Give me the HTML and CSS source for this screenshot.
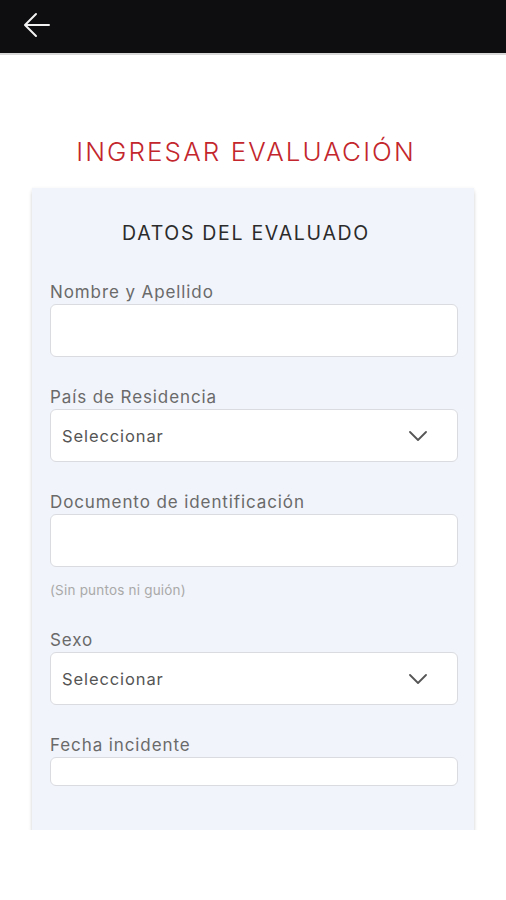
FILE: index.html
```html
<!DOCTYPE html>
<html lang="es">
<head>
<meta charset="utf-8">
<link rel="stylesheet" href="styles.css">
</head>
<body>
<header class="topbar">
  <svg class="back" width="28" height="26" viewBox="0 0 28 26"><path d="M26 13H3M13 2L2 13l11 11" fill="none" stroke="#f2f2f2" stroke-width="2" stroke-linecap="round" stroke-linejoin="round"/></svg>
</header>
<main class="page">
  <h1 class="title">INGRESAR EVALUACIÓN</h1>
  <section class="card">
    <h2 class="card-title">DATOS DEL EVALUADO</h2>
    <div class="field">
      <label class="label">Nombre y Apellido</label>
      <div class="input"></div>
    </div>
    <div class="field">
      <label class="label">País de Residencia</label>
      <div class="input select"><span>Seleccionar</span>
        <svg width="18" height="10" viewBox="0 0 18 10"><path d="M1 1l8 8 8-8" fill="none" stroke="#555" stroke-width="1.8" stroke-linecap="round" stroke-linejoin="round"/></svg>
      </div>
    </div>
    <div class="field">
      <label class="label">Documento de identificación</label>
      <div class="input"></div>
      <div class="hint">(Sin puntos ni guión)</div>
    </div>
    <div class="field">
      <label class="label">Sexo</label>
      <div class="input select"><span>Seleccionar</span>
        <svg width="18" height="10" viewBox="0 0 18 10"><path d="M1 1l8 8 8-8" fill="none" stroke="#555" stroke-width="1.8" stroke-linecap="round" stroke-linejoin="round"/></svg>
      </div>
    </div>
    <div class="field">
      <label class="label">Fecha incidente</label>
      <div class="input short"></div>
    </div>
  </section>
</main>
</body>
</html>
```
FILE: styles.css
```css
* { box-sizing: border-box; }
body {
  margin: 0;
  background: #fff;
  font-family: "Inter", "Noto Sans", sans-serif;
}
.topbar {
  height: 55px;
  background: #0e0e10;
  border-bottom: 2px solid #d8d8d8;
  display: flex;
  align-items: center;
  padding-left: 23px;
}
.back { display: block; margin-top: -4px; }
.page {
  padding: 80px 32px 0 32px;
}
.title {
  margin: 0 0 19px 0;
  text-align: center;
  font-weight: 300;
  font-size: 26px;
  letter-spacing: 2.1px;
  color: #c3262c;
  line-height: 34px;
  padding-right: 14px;
}
.card {
  width: 442px;
  background: #f1f4fa;
  padding: 30px 18px 44px 18px;
  box-shadow: 0 4px 4px rgba(0,0,0,0.16), 0 0 3px rgba(0,0,0,0.05);
}
.card-title {
  margin: 0 0 32px 0;
  text-align: center;
  font-weight: 400;
  font-size: 19.5px;
  letter-spacing: 1.7px;
  color: #2b2b2b;
  line-height: 30px;
  padding-right: 14px;
}
.field { margin-bottom: 28px; }
.field:last-child { margin-bottom: 0; }
.label {
  display: block;
  font-size: 17px;
  color: #6a6a6a;
  line-height: 24px;
  margin-bottom: 0;
  letter-spacing: 0.9px;
}
.input {
  width: 408px;
  height: 53px;
  background: #fff;
  border: 1px solid #d9dbe0;
  border-radius: 6px;
}
.input.short { height: 29px; }
.select {
  display: flex;
  align-items: center;
  justify-content: space-between;
  padding: 0 30px 0 11px;
  font-size: 16.5px;
  letter-spacing: 0.9px;
  color: #555;
}
.hint {
  margin-top: 13px;
  font-size: 13.5px;
  color: #a9a9a9;
  line-height: 20px;
  letter-spacing: 0.2px;
  margin-bottom: 0;
}
```
